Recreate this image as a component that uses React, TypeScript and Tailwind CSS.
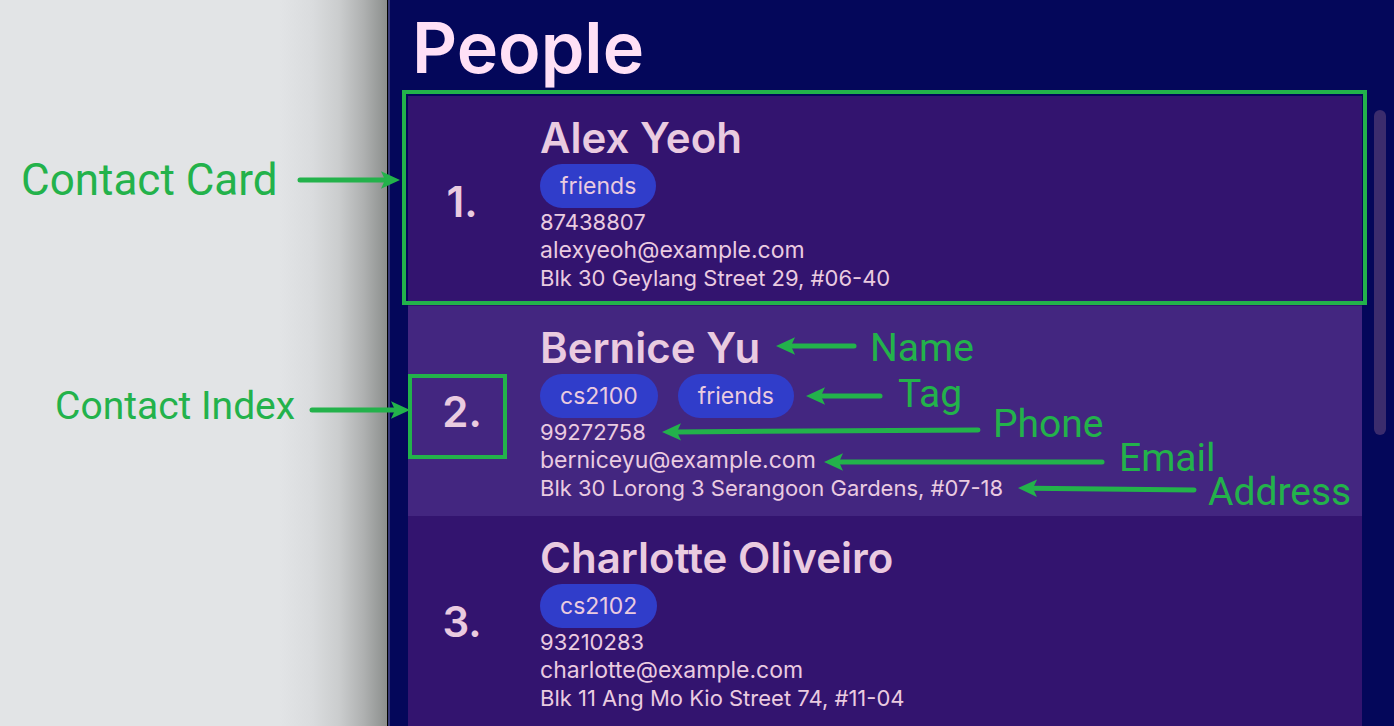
type Contact = {
  name: string;
  tags: string[];
  phone: string;
  email: string;
  address: string;
};

const contacts: Contact[] = [
  {
    name: "Alex Yeoh",
    tags: ["friends"],
    phone: "87438807",
    email: "alexyeoh@example.com",
    address: "Blk 30 Geylang Street 29, #06-40",
  },
  {
    name: "Bernice Yu",
    tags: ["cs2100", "friends"],
    phone: "99272758",
    email: "berniceyu@example.com",
    address: "Blk 30 Lorong 3 Serangoon Gardens, #07-18",
  },
  {
    name: "Charlotte Oliveiro",
    tags: ["cs2102"],
    phone: "93210283",
    email: "charlotte@example.com",
    address: "Blk 11 Ang Mo Kio Street 74, #11-04",
  },
];

function ContactCard({ contact, index }: { contact: Contact; index: number }) {
  const shade = index % 2 === 0 ? "bg-[#33146f]" : "bg-[#432680]";
  return (
    <li className={`flex items-center gap-6 pt-4 pb-[14px] text-[#eacbe0] ${shade}`}>
      <span className="w-[108px] shrink-0 text-center text-[42px] leading-[52px] font-semibold">
        {index + 1}.
      </span>
      <div className="min-w-0 text-[22px] leading-7 whitespace-nowrap">
        <h2 className="text-[42px] leading-[52px] font-semibold">{contact.name}</h2>
        <ul className="flex gap-5 text-[23px]">
          {contact.tags.map((tag) => (
            <li key={tag} className="rounded-full bg-[#303dca] px-5 py-2">
              {tag}
            </li>
          ))}
        </ul>
        <p>{contact.phone}</p>
        <p className="text-[23px]">{contact.email}</p>
        <p>{contact.address}</p>
      </div>
    </li>
  );
}

type Point = [number, number];

const arrows: { from: Point; to: Point }[] = [
  { from: [300, 180], to: [400, 180] },
  { from: [312, 410], to: [410, 410] },
  { from: [854, 346], to: [776, 346] },
  { from: [880, 396], to: [806, 396] },
  { from: [978, 430], to: [662, 432] },
  { from: [1102, 462], to: [824, 462] },
  { from: [1194, 490], to: [1018, 488] },
];

function Arrow({ from, to }: { from: Point; to: Point }) {
  const dx = to[0] - from[0];
  const dy = to[1] - from[1];
  const length = Math.hypot(dx, dy);
  const angle = (Math.atan2(dy, dx) * 180) / Math.PI;
  return (
    <g transform={`translate(${from[0]} ${from[1]}) rotate(${angle})`}>
      <line x1="0" y1="0" x2={length - 13} y2="0" stroke="#23b24b" strokeWidth="5" strokeLinecap="round" />
      <path
        d={`M${length} 0 L${length - 19} -8.7 L${length - 15} 0 L${length - 19} 8.7 Z`}
        fill="#23b24b"
      />
    </g>
  );
}

function Annotations() {
  return (
    <div className="pointer-events-none absolute inset-0 font-['Roboto','Liberation_Sans',sans-serif] text-[39px] leading-[48px] whitespace-nowrap text-[#23b24b]">
      <svg className="absolute top-0 left-0" width="1394" height="726" aria-hidden="true">
        <rect x="404" y="92" width="961" height="211" fill="none" stroke="#23b24b" strokeWidth="4" />
        <rect x="410" y="376" width="95" height="81" fill="none" stroke="#23b24b" strokeWidth="4" />
        {arrows.map((arrow) => (
          <Arrow key={arrow.from.join()} {...arrow} />
        ))}
      </svg>
      <span className="absolute top-[156px] left-[21px] text-[44px]">Contact Card</span>
      <span className="absolute top-[382px] left-[55px]">Contact Index</span>
      <span className="absolute top-[324px] left-[870px]">Name</span>
      <span className="absolute top-[370px] left-[898px]">Tag</span>
      <span className="absolute top-[400px] left-[993px]">Phone</span>
      <span className="absolute top-[434px] left-[1119px]">Email</span>
      <span className="absolute top-[468px] left-[1208px]">Address</span>
    </div>
  );
}

export default function App() {
  return (
    <div className="relative flex h-screen overflow-hidden bg-[#e2e4e6] font-['Inter','Liberation_Sans',sans-serif]">
      <div className="flex w-[387px] shrink-0 justify-end">
        <div className="w-[107px] bg-[linear-gradient(to_right,#e2e4e6,#dadcde_30%,#cbcdce_55%,#afb1b1_78%,#8c8f8d)]" />
      </div>
      <main className="flex min-w-0 grow border-l border-black bg-[#04075a]">
        <div className="w-[2px] shrink-0 bg-[#383a7a]" />
        <section className="min-w-0 grow pl-[18px]">
          <h1 className="h-24 pl-1 text-[70px] leading-[96px] font-semibold text-[#ffe0f6]">People</h1>
          <ol>
            {contacts.map((contact, i) => (
              <ContactCard key={contact.name} contact={contact} index={i} />
            ))}
          </ol>
        </section>
        <div className="flex w-8 shrink-0 justify-center pt-[110px] pr-2 pl-3">
          <div className="h-[325px] w-3 rounded-full bg-[#3b2c6d]" />
        </div>
      </main>
      <Annotations />
    </div>
  );
}
